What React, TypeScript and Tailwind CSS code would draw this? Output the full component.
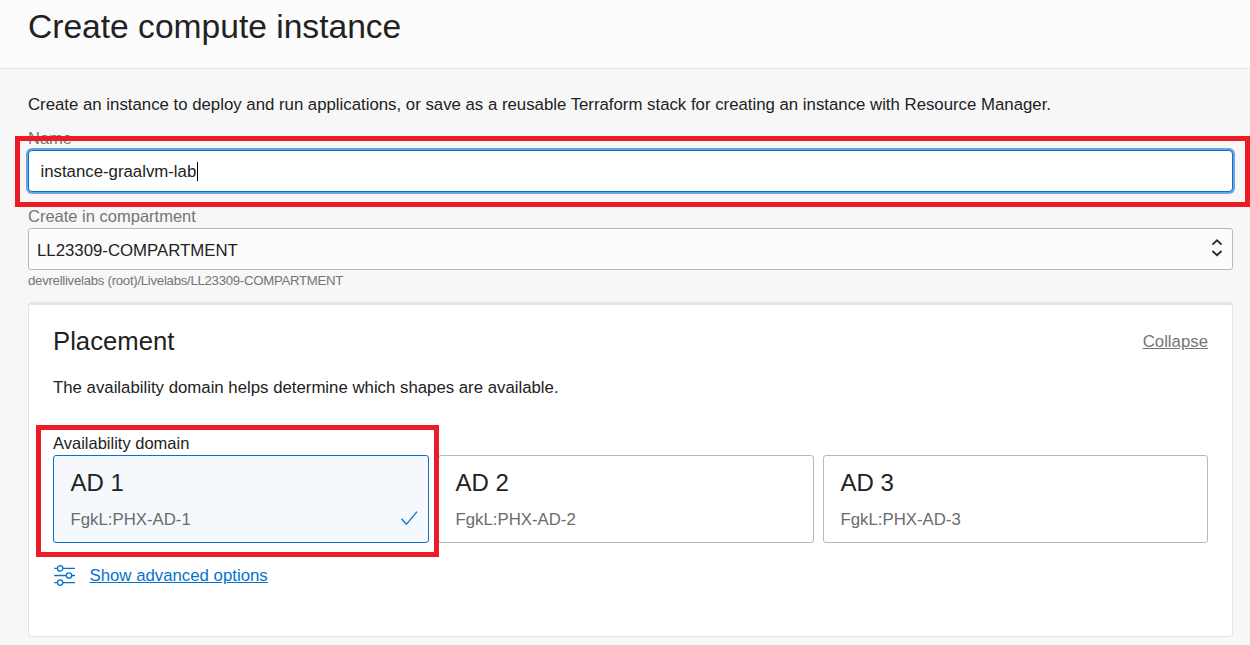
const domains = [
  { title: 'AD 1', name: 'FgkL:PHX-AD-1', selected: true },
  { title: 'AD 2', name: 'FgkL:PHX-AD-2', selected: false },
  { title: 'AD 3', name: 'FgkL:PHX-AD-3', selected: false },
];

function CheckIcon() {
  return (
    <svg width="18" height="16" viewBox="0 0 18 16" fill="none" stroke="#0572ce" strokeWidth="1.3">
      <path d="M1.5 7.7 L6.4 13.3 L17 0.6" />
    </svg>
  );
}

function SortIcon() {
  return (
    <svg width="12" height="20" viewBox="0 0 12 20" fill="none" stroke="#2b2b2b" strokeWidth="1.9">
      <path d="M1.4 5.6 L6 1.4 L10.6 5.6 M1.4 12 L6 16.2 L10.6 12" />
    </svg>
  );
}

function OptionsIcon() {
  return (
    <svg width="22" height="22" viewBox="0 0 22 22" fill="none" stroke="#0572ce" strokeWidth="1.3">
      <path d="M0.2 4.4 H3.4 M9 4.4 H21 M0.2 11.5 H12.2 M17.8 11.5 H21 M0.2 18.6 H3.4 M9 18.6 H21" />
      <circle cx="6.2" cy="4.4" r="2.7" />
      <circle cx="15" cy="11.5" r="2.7" />
      <circle cx="6.2" cy="18.6" r="2.7" />
    </svg>
  );
}

function DomainCard({ title, name, selected }: { title: string; name: string; selected: boolean }) {
  return (
    <div
      className={
        selected
          ? 'flex h-[88px] flex-col rounded-[3px] border border-[#0572ce] bg-[#f5f9fe] pt-3 pr-[10px] pl-[16.5px]'
          : 'flex h-[88px] flex-col rounded-[3px] border border-[#b4b8c0] bg-white pt-3 pr-[10px] pl-[16.5px]'
      }
    >
      <div className="h-[30px] text-[24px] leading-[30px]">{title}</div>
      <div className="mt-[10px] flex h-[22px] items-center justify-between text-[16.8px] leading-[22px] text-[#6b6b6b]">
        <span className="pt-[2px]">{name}</span>
        {selected && <CheckIcon />}
      </div>
    </div>
  );
}

export default function App() {
  return (
    <div className="relative h-[645px] w-[1250px] overflow-hidden bg-[#f7f7f7] font-['Liberation_Sans',Arial,sans-serif] text-[16.8px] text-[#222222]">
      <header className="h-[69px] border-b border-[#e4e4e4] bg-[#fcfcfc] px-7 pt-[7px]">
        <h1 className="text-[33.6px] leading-[40px]">Create compute instance</h1>
      </header>
      <main className="pr-[17px] pl-7">
        <p className="pt-[25px] leading-[22px]">
          Create an instance to deploy and run applications, or save as a reusable Terraform stack for creating an
          instance with Resource Manager.
        </p>
        <div className="mt-[11px] h-[23px] text-[16.5px] leading-[22px] text-[#757575]">Name</div>
        <div className="flex h-[42px] items-center rounded-[4px] border border-[#0572ce] bg-white pl-[11.5px] ring-2 ring-[#6ba4e4]">
          <span className="pt-[2px]">instance-graalvm-lab</span>
          <span className="ml-[0.5px] h-[19px] w-px bg-black" />
        </div>
        <div className="mt-[13px] h-[23px] text-[16.5px] leading-[22px] text-[#757575]">Create in compartment</div>
        <div className="flex h-[42px] items-center justify-between rounded-[3px] border border-[#b4b8c0] bg-[#fcfcfc] pr-[9px] pl-2">
          <span className="pt-[3px]">LL23309-COMPARTMENT</span>
          <SortIcon />
        </div>
        <div className="h-8 pt-[2px] text-[13.2px] leading-[18px] tracking-[-0.27px] text-[#757575]">
          devrellivelabs (root)/Livelabs/LL23309-COMPARTMENT
        </div>
        <section className="h-[335px] rounded-[4px] border border-t-[3px] border-[#e1e3e8] bg-white px-6 pt-5">
          <div className="flex h-8 items-center justify-between">
            <h2 className="text-[25.7px] leading-8">Placement</h2>
            <a className="pt-[2px] text-[#757575] underline">Collapse</a>
          </div>
          <p className="mt-[20px] leading-[22px]">The availability domain helps determine which shapes are available.</p>
          <div className="mt-[33px] h-[23px] text-[16.5px] leading-[22px]">Availability domain</div>
          <div className="grid grid-cols-[376px_376px_385px] gap-[9px]">
            {domains.map((d) => (
              <DomainCard key={d.title} title={d.title} name={d.name} selected={d.selected} />
            ))}
          </div>
          <div className="mt-[21px] flex h-[22px] items-center gap-[13.5px] pl-px">
            <OptionsIcon />
            <a className="pt-[2px] text-[#0572ce] underline">Show advanced options</a>
          </div>
        </section>
      </main>
      <div className="absolute top-[136px] left-[15px] h-[71px] w-[1235px] border-5 border-[#ed1c24]" />
      <div className="absolute top-[425px] left-[36px] h-[132px] w-[403px] border-5 border-[#ed1c24]" />
    </div>
  );
}
